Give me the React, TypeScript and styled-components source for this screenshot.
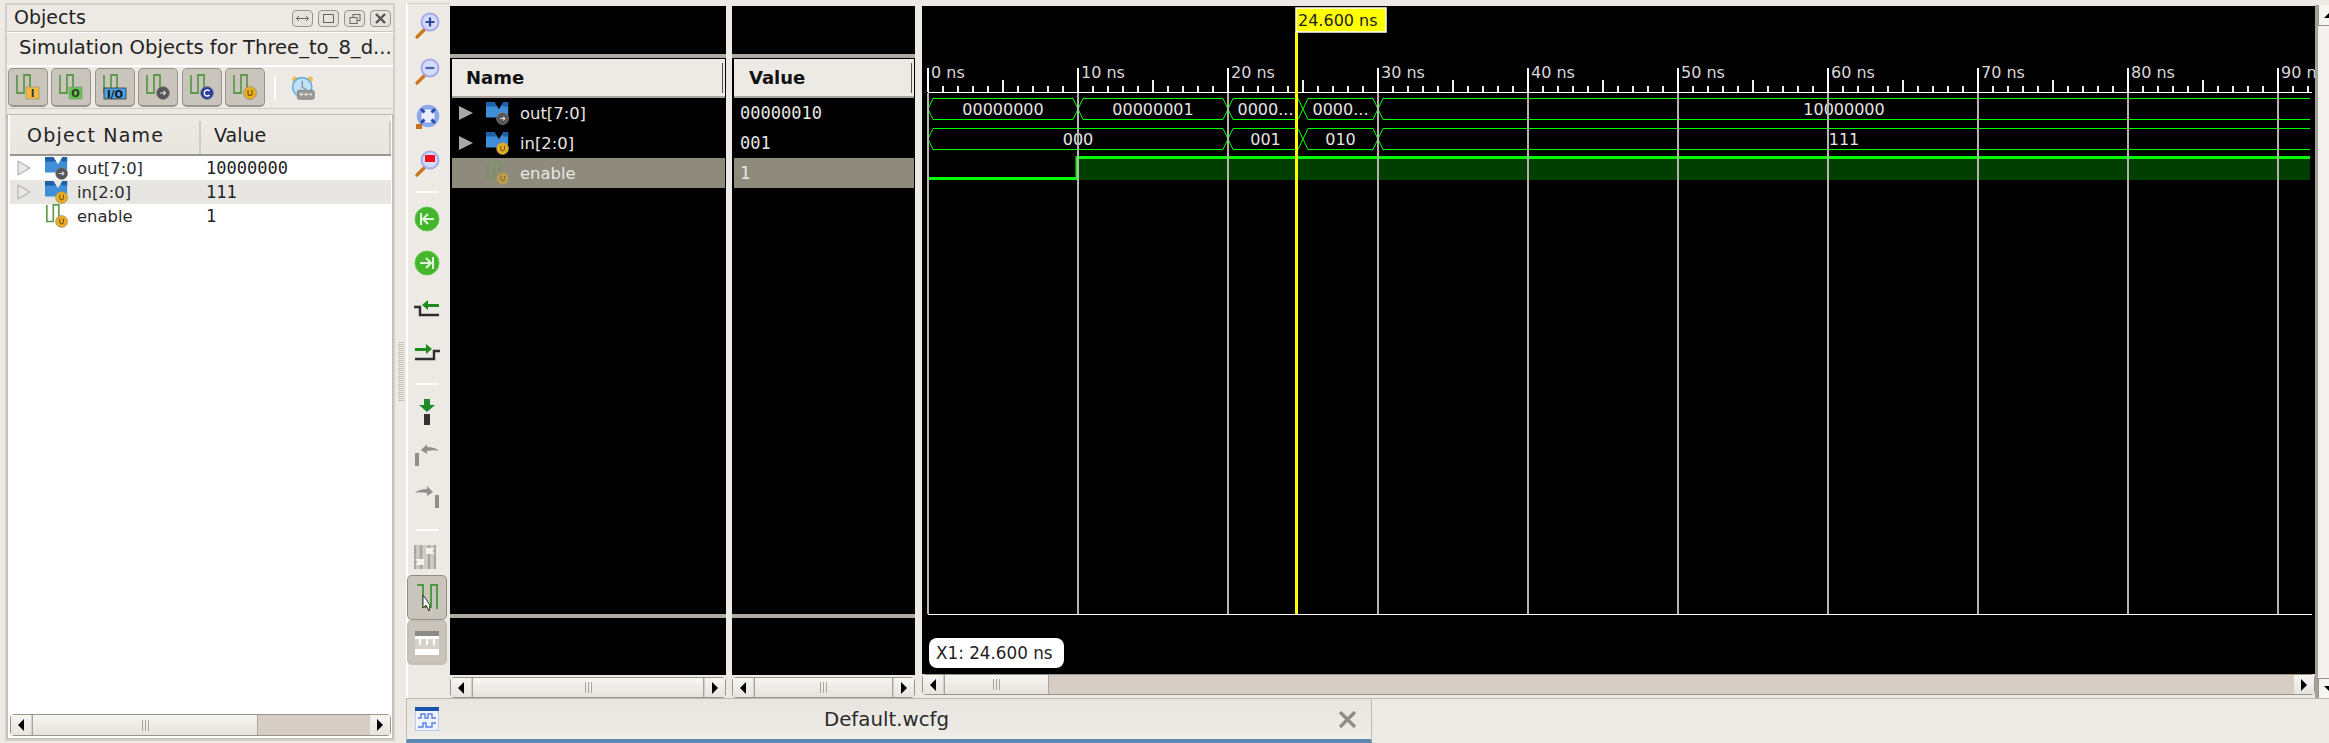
import React from 'react';
import styled, { createGlobalStyle } from 'styled-components';

const SANS = `"DejaVu Sans", sans-serif`;
const MONO = `"DejaVu Sans Mono", monospace`;

const GlobalStyle = createGlobalStyle`
  html, body {
    margin: 0;
    padding: 0;
    background: #edeae5;
    overflow: hidden;
  }
`;

const Page = styled.div`
  width: 2329px;
  height: 743px;
  display: flex;
  background: #edeae5;
  font-family: ${SANS};
  color: #222;
  overflow: hidden;
`;

/* ---------- left objects panel ---------- */

const ObjectsPanel = styled.div`
  width: 390px;
  margin-left: 5px;
  margin-top: 3px;
  height: 738px;
  box-sizing: border-box;
  border: 2px solid #d2cfc8;
  display: flex;
  flex-direction: column;
`;

const TitleBar = styled.div`
  height: 27px;
  flex: none;
  display: flex;
  align-items: center;
  justify-content: space-between;
  padding: 0 2px 2px 7px;
  box-sizing: border-box;
  border-bottom: 1px solid #c9c6bf;
  box-shadow: 0 1px 0 #fff;
  font-size: 19px;
`;

const ViewButtons = styled.div`
  display: flex;
  gap: 5px;
  padding-top: 3px;
`;

const ViewButton = styled.div`
  width: 19px;
  height: 15px;
  border: 1px solid #98948c;
  border-radius: 4px;
  background: #e6e3dd;
  display: flex;
  align-items: center;
  justify-content: center;
`;

const SubTitle = styled.div`
  height: 32px;
  flex: none;
  line-height: 32px;
  padding-left: 12px;
  font-size: 19.6px;
  white-space: nowrap;
  overflow: hidden;
`;

const ObjectTools = styled.div`
  height: 44px;
  flex: none;
  box-sizing: border-box;
  margin-top: 1px;
  border-top: 2px solid #fff;
  border-bottom: 1px solid #cfccc5;
  display: flex;
  align-items: center;
  gap: 3.4px;
  padding-left: 1px;
`;

const ObjectToolButton = styled.div`
  width: 40px;
  height: 39px;
  box-sizing: border-box;
  border: 1px solid #98948c;
  border-bottom-width: 2px;
  border-radius: 5px;
  background: #c9c5bd;
  display: flex;
  align-items: center;
  justify-content: center;
`;

const ToolDivider = styled.div`
  width: 2px;
  height: 24px;
  margin-left: 6px;
  background: #fff;
`;

const ClockWrap = styled.div`
  margin-left: 11px;
  display: flex;
`;

const ObjectTable = styled.div`
  flex: 1;
  margin-top: 5px;
  border: 1px solid #bdbab3;
  background: #fff;
  display: flex;
  flex-direction: column;
  padding: 0 1px 2px 2px;
`;

const ObjectHeader = styled.div`
  height: 41px;
  flex: none;
  box-sizing: border-box;
  background: linear-gradient(#edeae5, #e9e6e0);
  border-bottom: 2px solid #9a958e;
  display: flex;
  align-items: flex-end;
  font-size: 19px;
`;

const HeaderCell = styled.div<{ $width: number; $pad: number; $track?: number }>`
  width: ${(p) => p.$width}px;
  height: 33px;
  box-sizing: border-box;
  padding-left: ${(p) => p.$pad}px;
  line-height: 29px;
  letter-spacing: ${(p) => p.$track ?? 0}px;
  border-right: 2px solid #cfccc5;
`;

const ObjectRows = styled.div`
  flex: 1;
`;

const ObjectRow = styled.div<{ $alt?: boolean }>`
  height: 24px;
  display: flex;
  align-items: center;
  background: ${(p) => (p.$alt ? '#e8e6e2' : '#fff')};
  font-size: 16.4px;
`;

const ArrowSlot = styled.div`
  width: 35px;
  padding-left: 7px;
  box-sizing: border-box;
  display: flex;
`;

const RowIcon = styled.div<{ $dim?: boolean }>`
  width: 24px;
  height: 24px;
  display: flex;
  opacity: ${(p) => (p.$dim ? 0.55 : 1)};
`;

const ObjectName = styled.div`
  width: 137px;
  padding-left: 8px;
  box-sizing: border-box;
  color: #2c2c2c;
`;

const ObjectValue = styled.div`
  font-family: ${MONO};
  font-size: 17px;
`;

/* ---------- scrollbars ---------- */

const HScroll = styled.div<{ $height: number }>`
  height: ${(p) => p.$height}px;
  flex: none;
  box-sizing: border-box;
  border: 1px solid #98948c;
  border-radius: 4px;
  background: #d6cec5;
  display: flex;
`;

const ScrollButton = styled.div`
  width: 20px;
  flex: none;
  background: linear-gradient(#f7f5f2, #e7e4de);
  display: flex;
  align-items: center;
  justify-content: center;
`;

const Triangle = styled.div<{ $dir: 'left' | 'right' }>`
  width: 0;
  height: 0;
  border-top: 6px solid transparent;
  border-bottom: 6px solid transparent;
  ${(p) => (p.$dir === 'left' ? 'border-right: 6px solid #000;' : 'border-left: 6px solid #000;')}
`;

const Thumb = styled.div<{ $width?: number }>`
  ${(p) => (p.$width ? `width: ${p.$width}px; flex: none;` : 'flex: 1;')}
  box-sizing: border-box;
  margin: 0 1px;
  background: linear-gradient(#f7f5f2, #e6e3dd);
  border-right: 1px solid #a9a59d;
  border-left: 1px solid #a9a59d;
  display: flex;
  align-items: center;
  justify-content: center;
  gap: 2px;
`;

const Grip = styled.div`
  width: 1px;
  height: 11px;
  background: #a9a59d;
`;

const Spacer = styled.div`
  flex: 1;
`;

/* ---------- splitter + vertical toolbar ---------- */

const Splitter = styled.div`
  width: 11px;
  flex: none;
  display: flex;
  align-items: flex-start;
  justify-content: center;
  padding-top: 342px;
  box-sizing: border-box;
`;

const SplitGrip = styled.div`
  width: 6px;
  height: 60px;
  background: repeating-linear-gradient(#c6c3bc 0 1px, #edeae5 1px 2px);
`;

const RightArea = styled.div`
  flex: 1;
  display: flex;
  flex-direction: column;
  min-width: 0;
`;

const WorkRow = styled.div`
  height: 698px;
  flex: none;
  display: flex;
  box-sizing: border-box;
  padding-top: 3px;
`;

const VToolbar = styled.div`
  width: 44px;
  flex: none;
  box-sizing: border-box;
  border-left: 2px solid #fff;
  border-top: 1px solid #d2cfc8;
  padding: 2px 4px 0 0;
  display: flex;
  flex-direction: column;
  align-items: center;
`;

const ToolGroup = styled.div<{ $gap: number; $top: number }>`
  display: flex;
  flex-direction: column;
  gap: ${(p) => p.$gap}px;
  margin-top: ${(p) => p.$top}px;
`;

const ToolSlot = styled.div`
  width: 36px;
  height: 36px;
  display: flex;
  align-items: center;
  justify-content: center;
`;

const ToolSep = styled.div<{ $top: number }>`
  width: 22px;
  height: 2px;
  flex: none;
  margin-top: ${(p) => p.$top}px;
  background: #fff;
`;

const PressButton = styled.div<{ $soft?: boolean }>`
  width: 40px;
  height: 45px;
  box-sizing: border-box;
  border: ${(p) => (p.$soft ? '2px solid #c2bfb7' : '1px solid #8f8b84')};
  border-radius: 5px;
  background: #c9c5bd;
  display: flex;
  align-items: center;
  justify-content: center;
`;

/* ---------- name / value columns ---------- */

const BlackColumn = styled.div<{ $width: number }>`
  width: ${(p) => p.$width}px;
  flex: none;
  display: flex;
  flex-direction: column;
  box-sizing: border-box;
  margin-top: 3px;
`;

const ColumnBody = styled.div`
  flex: 1;
  background: #000;
  display: flex;
  flex-direction: column;
`;

const ColumnTop = styled.div`
  height: 48px;
  flex: none;
`;

const ColumnRule = styled.div`
  height: 4px;
  flex: none;
  background: #aeaaa3;
`;

const ColumnHeader = styled.div<{ $pad: number }>`
  height: 39px;
  flex: none;
  margin: 1px 1px 0 2px;
  box-sizing: border-box;
  background: #edeae5;
  border-bottom: 2px solid #a8a49c;
  padding-left: ${(p) => p.$pad}px;
  display: flex;
  align-items: center;
  justify-content: space-between;
  font-weight: 700;
  font-size: 18px;
  color: #111;
`;

const HeaderTick = styled.div`
  width: 1px;
  height: 30px;
  margin-right: 2px;
  background: #55524d;
`;

const ColumnRows = styled.div`
  flex: 1;
  margin: 0 1px 0 2px;
`;

const SignalRow = styled.div<{ $selected?: boolean }>`
  height: 30px;
  display: flex;
  align-items: center;
  background: ${(p) => (p.$selected ? '#8e8b7c' : 'transparent')};
  color: #e6e6e6;
  font-size: 16.4px;
`;

const SignalArrow = styled.div`
  width: 34px;
  padding-left: 7px;
  box-sizing: border-box;
  display: flex;
`;

const SignalName = styled.div`
  padding-left: 10px;
`;

const SignalValue = styled.div`
  padding-left: 6px;
  font-family: ${MONO};
  font-size: 17px;
`;

const ColumnFoot = styled.div`
  height: 57px;
  flex: none;
`;

const Gutter = styled.div<{ $width: number }>`
  width: ${(p) => p.$width}px;
  flex: none;
`;

const ScrollGap = styled.div`
  height: 2px;
  flex: none;
  background: #edeae5;
`;

/* ---------- waveform ---------- */

const WaveColumn = styled.div`
  flex: 1;
  min-width: 0;
  display: flex;
  flex-direction: column;
`;

const WaveCanvas = styled.div`
  position: relative;
  height: 668px;
  flex: none;
  margin-top: 3px;
  background: #000;
  overflow: hidden;
`;

const WaveSvg = styled.svg`
  display: block;
  font-family: ${SANS};
`;

const MarkerTag = styled.div`
  position: absolute;
  left: 7px;
  top: 632px;
  width: 135px;
  height: 30px;
  box-sizing: border-box;
  padding-left: 7px;
  border-radius: 8px;
  background: #fff;
  color: #222;
  font-size: 16.8px;
  line-height: 30px;
  white-space: nowrap;
`;

const VScroll = styled.div`
  width: 14px;
  flex: none;
  margin-top: 2px;
  height: 694px;
  box-sizing: border-box;
  border-left: 3px solid #a5a29a;
  display: flex;
  flex-direction: column;
  background: #f4f2ee;
`;

const VScrollEnd = styled.div<{ $down?: boolean }>`
  height: 21px;
  flex: none;
  box-sizing: border-box;
  border-left: 1px solid #98948c;
  ${(p) => (p.$down ? 'border-top: 1px solid #98948c;' : 'border-bottom: 1px solid #98948c;')}
  background: #f7f5f2;
  display: flex;
  align-items: center;
  padding-left: 5px;
`;

const VTriangle = styled.div<{ $down?: boolean }>`
  width: 0;
  height: 0;
  border-left: 6px solid transparent;
  border-right: 6px solid transparent;
  ${(p) => (p.$down ? 'border-top: 6px solid #000;' : 'border-bottom: 6px solid #000;')}
`;

/* ---------- tab bar ---------- */

const TabBar = styled.div`
  flex: 1;
  display: flex;
  border-top: 1px solid #bdbab3;
`;

const EditorTab = styled.div`
  width: 966px;
  height: 44px;
  flex: none;
  box-sizing: border-box;
  display: flex;
  align-items: center;
  padding: 0 14px 0 8px;
  border-left: 1px solid #bdbab3;
  border-right: 1px solid #bdbab3;
  border-bottom: 4px solid #5f87b2;
  background: linear-gradient(#e8e5e0, #f0ede8);
  font-size: 19.8px;
`;

const TabLabel = styled.div`
  flex: 1;
  text-align: center;
  color: #2a2a2a;
  padding-right: 4px;
`;

/* ---------- icons ---------- */

type Badge = 'i' | 'o' | 'io' | 'grey' | 'blue' | 'gold';

const BadgeMark = ({ kind }: { kind: Badge }) => {
  if (kind === 'i' || kind === 'o') {
    const fill = kind === 'i' ? '#f2b93a' : '#62c74e';
    return (
      <g>
        <rect x="11" y="13" width="13" height="12" fill={fill} stroke="#8a8a80" strokeWidth="0.6" />
        <text x="17.5" y="23.2" fontSize="10" fontWeight="700" textAnchor="middle" fill="#333">{kind === 'i' ? 'I' : 'O'}</text>
      </g>
    );
  }
  if (kind === 'io') {
    return (
      <g>
        <rect x="2" y="14" width="22" height="11" fill="#4aa3e6" stroke="#333" strokeWidth="0.8" />
        <text x="13" y="23.5" fontSize="10" fontWeight="700" textAnchor="middle" fill="#111">I/O</text>
      </g>
    );
  }
  const fill = kind === 'grey' ? '#55555a' : kind === 'blue' ? '#2b3f9c' : '#e9ad22';
  return (
    <g>
      <circle cx="18" cy="19" r="6.5" fill={fill} stroke="#8c8c84" strokeWidth="0.7" />
      {kind === 'grey' && <path d="M15 19h5M18.5 17l2 2-2 2" stroke="#ddd" strokeWidth="1.2" fill="none" />}
      {kind === 'blue' && <path d="M20.5 17a3 3 0 1 0 0 4" stroke="#fff" strokeWidth="1.4" fill="none" />}
      {kind === 'gold' && <path d="M16 16v3.5a2 2 0 0 0 4 0V16" stroke="#7a5b10" strokeWidth="1.2" fill="none" />}
    </g>
  );
};

const PulseIcon = ({ badge, size = 26 }: { badge: Badge; size?: number }) => (
  <svg width={size} height={size} viewBox="0 0 26 26">
    <path d="M2 1V19H9V1H15V16" fill="none" stroke="#5f9a4a" strokeWidth="1.8" />
    <BadgeMark kind={badge} />
  </svg>
);

const BusIcon = ({ badge }: { badge: Badge }) => (
  <svg width="24" height="24" viewBox="0 0 26 26">
    <path d="M0 1h9l5 8 5-8h5v14l-5 3H0z" fill="#3f8fd8" />
    <path d="M0 1h9l3 5H0z" fill="#1f5fa8" />
    <path d="M17 4l2-3h5v5h-5z" fill="#1f5fa8" />
    <BadgeMark kind={badge} />
  </svg>
);

const TreeArrow = ({ dark }: { dark?: boolean }) => (
  <svg width="14" height="16" viewBox="0 0 14 16">
    {dark ? (
      <path d="M0 1l14 7-14 7z" fill="#a8a8a8" />
    ) : (
      <path d="M1 1l12 7-12 7z" fill="#e8e8e8" stroke="#a5a5a0" strokeWidth="1" />
    )}
  </svg>
);

const ClockIcon = () => (
  <svg width="24" height="26" viewBox="0 0 30 32">
    <circle cx="5" cy="5" r="3.5" fill="#e9c04a" />
    <circle cx="24" cy="5" r="3.5" fill="#e9c04a" />
    <circle cx="14" cy="15" r="12" fill="#bfe0f5" stroke="#69aee0" strokeWidth="2" />
    <path d="M14 7v8l5 3" stroke="#7a8a9a" strokeWidth="1.5" fill="none" />
    <rect x="8" y="19" width="21" height="11" rx="2" fill="#9a9a96" stroke="#777" />
    <path d="M11 24h4M17 24h4M23 24h3" stroke="#eee" strokeWidth="2" />
  </svg>
);

const Lens = ({ children }: { children: React.ReactNode }) => (
  <svg width="30" height="30" viewBox="0 0 30 30">
    <path d="M12 20L5 27" stroke="#c8791f" strokeWidth="3.4" strokeLinecap="round" />
    <circle cx="18" cy="12" r="8.5" fill="#d3dcfa" stroke="#a9a9ea" strokeWidth="2" />
    {children}
  </svg>
);

const ZoomInIcon = () => (
  <Lens>
    <path d="M13.5 12h9M18 7.5v9" stroke="#2c4a96" strokeWidth="2.2" />
  </Lens>
);

const ZoomOutIcon = () => (
  <Lens>
    <path d="M13.5 12h9" stroke="#4a62a8" strokeWidth="2.2" />
  </Lens>
);

const ZoomRedIcon = () => (
  <Lens>
    <rect x="13" y="7" width="10" height="7" fill="#ee0d1c" />
  </Lens>
);

const FitIcon = () => (
  <svg width="30" height="30" viewBox="0 0 30 30">
    <circle cx="16" cy="14" r="9" fill="#e8eefc" stroke="#8ea6ee" strokeWidth="4.5" />
    <path d="M9 7l3.5 3.5M23 7l-3.5 3.5M9 21l3.5-3.5M23 21l-3.5-3.5" stroke="#24489a" strokeWidth="2.6" />
    <rect x="4" y="22" width="6" height="5" fill="#c8701f" />
  </svg>
);

const GreenJump = ({ flip }: { flip?: boolean }) => (
  <svg width="26" height="26" viewBox="0 0 26 26">
    <circle cx="13" cy="13" r="12" fill="#45b52d" stroke="#5fcf48" strokeWidth="1" />
    <g transform={flip ? 'matrix(-1 0 0 1 26 0)' : undefined} stroke="#e2f5dc" strokeWidth="2" fill="none">
      <path d="M7 7v12M20 13H10M14 8l-5 5 5 5" />
    </g>
  </svg>
);

const StepIcon = ({ flip }: { flip?: boolean }) => (
  <svg width="26" height="22" viewBox="0 0 26 22">
    <g transform={flip ? 'matrix(-1 0 0 1 26 0)' : undefined}>
      <path d="M25 19H6V11H0" fill="none" stroke="#2e2e2e" strokeWidth="2.4" />
      <path d="M25 8H14V4L8 9l6 5v-3h11z" fill="#1f8a1f" />
    </g>
  </svg>
);

const DownStepIcon = () => (
  <svg width="18" height="26" viewBox="0 0 18 26">
    <path d="M6 0h6v6h5l-8 7-8-7h5z" fill="#1f8a2a" />
    <rect x="6" y="15" width="6" height="11" fill="#333" />
  </svg>
);

const TurnIcon = ({ flip }: { flip?: boolean }) => (
  <svg width="26" height="24" viewBox="0 0 26 24">
    <g transform={flip ? 'matrix(-1 0 0 1 26 0)' : undefined} fill="#8f8f8b">
      <rect x="1" y="11" width="4" height="13" />
      <path d="M7 8l6-6v3c5 0 9 1 12 4-3-1-7-1-12 0v3z" />
    </g>
  </svg>
);

const SnapIcon = () => (
  <svg width="22" height="24" viewBox="0 0 22 24">
    <rect width="22" height="24" fill="#cfccc6" />
    <path d="M1 0v24M7 0v24M15 0v24M21 0v24" stroke="#a5a5a1" strokeWidth="2.4" />
    <path d="M12 3h9l-3 3 3 3h-9z" fill="#f2f2ee" />
    <path d="M10 14h-9l3 3-3 3h9z" fill="#f2f2ee" />
  </svg>
);

const CursorWaveIcon = () => (
  <svg width="26" height="30" viewBox="0 0 26 30">
    <path d="M3 2h6v22h8V2h6v24" fill="none" stroke="#4f9a3f" strokeWidth="2" />
    <path d="M9 12v13l3-3 3 6 1-6-7-10z" fill="#fff" stroke="#333" strokeWidth="1" />
  </svg>
);

const TableIcon = () => (
  <svg width="24" height="24" viewBox="0 0 24 24">
    <rect width="24" height="5" fill="#8a8a86" />
    <rect y="5" width="24" height="19" fill="#fff" />
    <rect y="8" width="24" height="10" fill="#d5d2cc" />
    <path d="M5 8v6M12 8v6M19 8v6" stroke="#fff" strokeWidth="2" />
  </svg>
);

const WaveTabIcon = () => (
  <svg width="24" height="24" viewBox="0 0 24 24">
    <rect width="24" height="24" fill="#eef3ff" stroke="#7ea4e0" />
    <rect width="24" height="4" fill="#1a55a8" />
    <path d="M3 11h3V7h4v4h3V7h4v4h4M3 20h5v-4h3v4h6v-4h4" fill="none" stroke="#5a7fe0" strokeWidth="1.4" />
  </svg>
);

const CloseGlyph = () => (
  <svg width="19" height="17" viewBox="0 0 19 17">
    <path d="M2 1l15 15M17 1L2 16" stroke="#8e8e89" strokeWidth="3.4" />
  </svg>
);

const Scrollbar = ({ thumb, height = 21 }: { thumb?: number; height?: number }) => (
  <HScroll $height={height}>
    <ScrollButton><Triangle $dir="left" /></ScrollButton>
    <Thumb $width={thumb}>
      <Grip /><Grip /><Grip />
    </Thumb>
    {thumb ? <Spacer /> : null}
    <ScrollButton><Triangle $dir="right" /></ScrollButton>
  </HScroll>
);

/* ---------- wave data ---------- */

const X0 = 928;
const PER_NS = 15;
const END = 2310;
const nsToX = (ns: number) => X0 + ns * PER_NS;

const LABELS = [0, 10, 20, 30, 40, 50, 60, 70, 80, 90];
const TICK_XS = Array.from({ length: 93 }, (_, i) => X0 + i * PER_NS).filter((x) => x <= 2312);

type Segment = { from: number; to?: number; text: string };

const OUT_BUS: Segment[] = [
  { from: 0, to: 10, text: '00000000' },
  { from: 10, to: 20, text: '00000001' },
  { from: 20, to: 25, text: '0000...' },
  { from: 25, to: 30, text: '0000...' },
  { from: 30, text: '10000000' },
];

const IN_BUS: Segment[] = [
  { from: 0, to: 20, text: '000' },
  { from: 20, to: 25, text: '001' },
  { from: 25, to: 30, text: '010' },
  { from: 30, text: '111' },
];

const BusTrace = ({ segments, top }: { segments: Segment[]; top: number }) => {
  const bottom = top + 21;
  const mid = top + 10.5;
  return (
    <g>
      {segments.map((s) => {
        const x1 = nsToX(s.from);
        const x2 = s.to === undefined ? END : nsToX(s.to);
        const d =
          s.to === undefined
            ? `M${x2} ${top}H${x1 + 5}L${x1} ${mid}L${x1 + 5} ${bottom}H${x2}`
            : `M${x1 + 5} ${top}H${x2 - 5}L${x2} ${mid}L${x2 - 5} ${bottom}H${x1 + 5}L${x1} ${mid}Z`;
        return (
          <g key={s.from}>
            <path d={d} fill="none" stroke="#00ff00" strokeWidth="1" />
            <text x={(x1 + x2) / 2} y={mid + 6} fontSize="16" textAnchor="middle" fill="#e4e4e4">{s.text}</text>
          </g>
        );
      })}
    </g>
  );
};

const WaveChart = () => (
  <WaveSvg width="1393" height="668" viewBox="922 6 1393 668">
    {TICK_XS.map((x, i) => (
      <rect key={x} x={x - 1} y={i % 5 === 0 ? 80 : 86} width="2" height={i % 5 === 0 ? 12 : 6} fill="#eee" />
    ))}
    <rect x={X0} y="92" width={2312 - X0} height="1" fill="#fff" />
    <rect x={X0} y="614" width={2312 - X0} height="1" fill="#fff" />
    <BusTrace segments={OUT_BUS} top={98.5} />
    <BusTrace segments={IN_BUS} top={128.5} />
    <rect x={nsToX(10)} y="159" width={END - nsToX(10)} height="21" fill="#003f00" />
    <path d={`M${X0} 178.5H${nsToX(10) - 1}V157.5H${END}`} fill="none" stroke="#00ff00" strokeWidth="3" />
    {LABELS.map((ns) => (
      <g key={ns}>
        <rect x={nsToX(ns) - 1} y="68" width="2" height="24" fill="#fff" />
        <rect x={nsToX(ns) - 1} y="93" width="2" height="521" fill="#b4b3ae" />
        <text x={nsToX(ns) + 3} y="78" fontSize="16" fill="#d8d8d8">{`${ns} ns`}</text>
      </g>
    ))}
    <rect x="1295" y="32" width="3" height="582" fill="#ffff00" />
    <rect x="1296" y="8" width="90" height="24" fill="#ffff00" stroke="#fff" strokeWidth="1.5" />
    <text x="1298" y="26" fontSize="16" fill="#222">24.600 ns</text>
  </WaveSvg>
);

const OBJECT_TOOLS: { badge: Badge }[] = [
  { badge: 'i' },
  { badge: 'o' },
  { badge: 'io' },
  { badge: 'grey' },
  { badge: 'blue' },
  { badge: 'gold' },
];

const App: React.FC = () => (
  <Page>
    <GlobalStyle />
    <ObjectsPanel>
      <TitleBar>
        Objects
        <ViewButtons>
          <ViewButton>
            <svg width="13" height="7" viewBox="0 0 13 7"><path d="M0 3.5h13M3 1L0.5 3.5 3 6M10 1l2.5 2.5L10 6" stroke="#666" fill="none" /></svg>
          </ViewButton>
          <ViewButton>
            <svg width="11" height="9" viewBox="0 0 11 9"><rect x="0.5" y="0.5" width="10" height="8" stroke="#666" fill="none" /></svg>
          </ViewButton>
          <ViewButton>
            <svg width="12" height="10" viewBox="0 0 12 10"><rect x="4" y="0.5" width="7" height="6" stroke="#666" fill="none" /><rect x="1" y="3.5" width="7" height="6" stroke="#666" fill="#e6e3dd" /></svg>
          </ViewButton>
          <ViewButton>
            <svg width="11" height="11" viewBox="0 0 11 11"><path d="M1 1l9 9M10 1l-9 9" stroke="#555" strokeWidth="2.4" /></svg>
          </ViewButton>
        </ViewButtons>
      </TitleBar>
      <SubTitle>Simulation Objects for Three_to_8_d...</SubTitle>
      <ObjectTools>
        {OBJECT_TOOLS.map((t) => (
          <ObjectToolButton key={t.badge}><PulseIcon badge={t.badge} /></ObjectToolButton>
        ))}
        <ToolDivider />
        <ClockWrap><ClockIcon /></ClockWrap>
      </ObjectTools>
      <ObjectTable>
        <ObjectHeader>
          <HeaderCell $width={192} $pad={17} $track={1.2}>Object Name</HeaderCell>
          <HeaderCell $width={191} $pad={13}>Value</HeaderCell>
        </ObjectHeader>
        <ObjectRows>
          <ObjectRow>
            <ArrowSlot><TreeArrow /></ArrowSlot>
            <RowIcon><BusIcon badge="grey" /></RowIcon>
            <ObjectName>out[7:0]</ObjectName>
            <ObjectValue>10000000</ObjectValue>
          </ObjectRow>
          <ObjectRow $alt>
            <ArrowSlot><TreeArrow /></ArrowSlot>
            <RowIcon><BusIcon badge="gold" /></RowIcon>
            <ObjectName>in[2:0]</ObjectName>
            <ObjectValue>111</ObjectValue>
          </ObjectRow>
          <ObjectRow>
            <ArrowSlot />
            <RowIcon><PulseIcon badge="gold" size={24} /></RowIcon>
            <ObjectName>enable</ObjectName>
            <ObjectValue>1</ObjectValue>
          </ObjectRow>
        </ObjectRows>
        <Scrollbar thumb={226} height={22} />
      </ObjectTable>
    </ObjectsPanel>

    <Splitter><SplitGrip /></Splitter>

    <RightArea>
      <WorkRow>
        <VToolbar>
          <ToolGroup $gap={10} $top={1}>
            <ToolSlot><ZoomInIcon /></ToolSlot>
            <ToolSlot><ZoomOutIcon /></ToolSlot>
            <ToolSlot><FitIcon /></ToolSlot>
            <ToolSlot><ZoomRedIcon /></ToolSlot>
          </ToolGroup>
          <ToolSep $top={10} />
          <ToolGroup $gap={8} $top={8}>
            <ToolSlot><GreenJump /></ToolSlot>
            <ToolSlot><GreenJump flip /></ToolSlot>
            <ToolSlot><StepIcon /></ToolSlot>
            <ToolSlot><StepIcon flip /></ToolSlot>
          </ToolGroup>
          <ToolSep $top={14} />
          <ToolGroup $gap={6} $top={9}>
            <ToolSlot><DownStepIcon /></ToolSlot>
            <ToolSlot><TurnIcon /></ToolSlot>
            <ToolSlot><TurnIcon flip /></ToolSlot>
          </ToolGroup>
          <ToolSep $top={15} />
          <ToolGroup $gap={0} $top={8}>
            <ToolSlot><SnapIcon /></ToolSlot>
            <PressButton><CursorWaveIcon /></PressButton>
            <PressButton $soft><TableIcon /></PressButton>
          </ToolGroup>
        </VToolbar>

        <BlackColumn $width={276}>
          <ColumnBody>
            <ColumnTop />
            <ColumnRule />
            <ColumnHeader $pad={14}>Name<HeaderTick /></ColumnHeader>
            <ColumnRows>
              <SignalRow>
                <SignalArrow><TreeArrow dark /></SignalArrow>
                <RowIcon><BusIcon badge="grey" /></RowIcon>
                <SignalName>out[7:0]</SignalName>
              </SignalRow>
              <SignalRow>
                <SignalArrow><TreeArrow dark /></SignalArrow>
                <RowIcon><BusIcon badge="gold" /></RowIcon>
                <SignalName>in[2:0]</SignalName>
              </SignalRow>
              <SignalRow $selected>
                <SignalArrow />
                <RowIcon $dim><PulseIcon badge="gold" size={24} /></RowIcon>
                <SignalName>enable</SignalName>
              </SignalRow>
            </ColumnRows>
            <ColumnRule />
            <ColumnFoot />
          </ColumnBody>
          <ScrollGap />
          <Scrollbar />
        </BlackColumn>
        <Gutter $width={6} />
        <BlackColumn $width={183}>
          <ColumnBody>
            <ColumnTop />
            <ColumnRule />
            <ColumnHeader $pad={15}>Value<HeaderTick /></ColumnHeader>
            <ColumnRows>
              <SignalRow><SignalValue>00000010</SignalValue></SignalRow>
              <SignalRow><SignalValue>001</SignalValue></SignalRow>
              <SignalRow $selected><SignalValue>1</SignalValue></SignalRow>
            </ColumnRows>
            <ColumnRule />
            <ColumnFoot />
          </ColumnBody>
          <ScrollGap />
          <Scrollbar />
        </BlackColumn>
        <Gutter $width={7} />

        <WaveColumn>
          <WaveCanvas>
            <WaveChart />
            <MarkerTag>X1: 24.600 ns</MarkerTag>
          </WaveCanvas>
          <Scrollbar thumb={105} />
        </WaveColumn>

        <VScroll>
          <VScrollEnd><VTriangle /></VScrollEnd>
          <Spacer />
          <VScrollEnd $down><VTriangle $down /></VScrollEnd>
        </VScroll>
      </WorkRow>

      <TabBar>
        <EditorTab>
          <WaveTabIcon />
          <TabLabel>Default.wcfg</TabLabel>
          <CloseGlyph />
        </EditorTab>
      </TabBar>
    </RightArea>
  </Page>
);

export default App;
